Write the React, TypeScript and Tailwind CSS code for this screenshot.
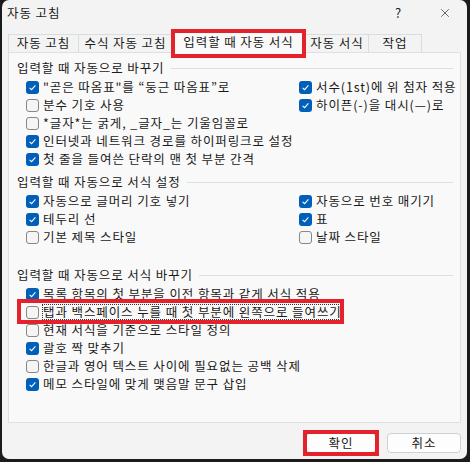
import * as React from 'react';
import { X } from 'lucide-react';

interface IItem {
  label: string;
  checked: boolean;
  focused?: boolean;
}

const CheckBox: React.FC<{ checked: boolean }> = ({ checked }) =>
  checked ? (
    <span className="flex h-[13px] w-[13px] shrink-0 items-center justify-center rounded-[3px] bg-[#005fb8]">
      <svg width="9" height="9" viewBox="0 0 9 9">
        <path d="M1.6 4.8 L3.6 6.6 L7.4 2.4" fill="none" stroke="#ffffff" strokeWidth="1.1" />
      </svg>
    </span>
  ) : (
    <span className="h-[13px] w-[13px] shrink-0 rounded-[3px] border border-[#878787] bg-[#f5f5f5]" />
  );

const Row: React.FC<{ item: IItem }> = ({ item }) => (
  <div className="relative flex h-[18px] items-center gap-[4px]">
    <CheckBox checked={item.checked} />
    <span
      className={
        item.focused
          ? 'whitespace-nowrap leading-[14px] outline-1 outline-dotted outline-[#333]'
          : 'whitespace-nowrap'
      }
    >
      {item.label}
    </span>
    {item.focused && (
      <div className="absolute -left-[9px] -top-[4px] h-[25px] w-[327px] border-4 border-[#e3222c]" />
    )}
  </div>
);

const Header: React.FC<{ title: string; className?: string }> = ({ title, className }) => (
  <div className={`flex h-[18px] items-center ${className ?? ''}`}>
    <span className="whitespace-nowrap">{title}</span>
    <div className="ml-[6px] mr-[7px] h-px flex-1 bg-[#dedede]" />
  </div>
);

const Column: React.FC<{ items: IItem[]; className?: string }> = ({ items, className }) => (
  <div className={`flex flex-col ${className ?? ''}`}>
    {items.map((item) => (
      <Row key={item.label} item={item} />
    ))}
  </div>
);

const tabs = [
  { label: '자동 고침', width: 'w-[70px]' },
  { label: '수식 자동 고침', width: 'w-[94px]' },
  { label: '입력할 때 자동 서식', width: 'w-[133px]', active: true },
  { label: '자동 서식', width: 'w-[63px]' },
  { label: '작업', width: 'w-[54px]' },
];

const App: React.FC = () => {
  return (
    <div className="h-[462px] w-[470px] bg-[#1b1b1b] font-['Noto_Sans_CJK_KR','Malgun_Gothic',sans-serif] text-[12.5px] tracking-[0.9px] text-[#1a1a1a]">
      <div className="ml-[2px] flex h-[459px] w-[465px] flex-col rounded-[7px] bg-[#f3f3f3]">
        {/* Title bar */}
        <div className="flex h-[28px] items-center justify-between pb-[2px] pl-[5px] pr-[15px]">
          <span>자동 고침</span>
          <div className="flex items-center gap-[36px]">
            <span className="text-[13px]">?</span>
            <X size={14} strokeWidth={1.1} />
          </div>
        </div>

        {/* Tabs */}
        <div className="relative z-10 flex h-[24px] items-end pl-[6px]">
          {tabs.map((tab) =>
            tab.active ? (
              <div
                key={tab.label}
                className={`relative -mb-px flex h-[22px] items-center justify-center border-x border-t border-[#dcdcdc] bg-[#f9f9f9] ${tab.width}`}
              >
                {tab.label}
                <div className="absolute -bottom-[5px] -left-[2px] -right-[2px] -top-[3px] border-4 border-[#e3222c]" />
              </div>
            ) : (
              <div
                key={tab.label}
                className={`flex h-[18px] items-center justify-center border-l border-t border-[#dcdcdc] last:border-r ${tab.width}`}
              >
                {tab.label}
              </div>
            )
          )}
        </div>

        {/* Panel */}
        <div className="mx-[6px] flex h-[371px] flex-col border border-[#e0e0e0] bg-[#f9f9f9] pl-[8px] pt-[6px]">
          <Header title="입력할 때 자동으로 바꾸기" className="mb-px" />
          <div className="ml-[9px] flex">
            <Column
              className="w-[273px]"
              items={[
                { label: '"곧은 따옴표"를 “둥근 따옴표”로', checked: true },
                { label: '분수 기호 사용', checked: false },
                { label: '*글자*는 굵게, _글자_는 기울임꼴로', checked: false },
                { label: '인터넷과 네트워크 경로를 하이퍼링크로 설정', checked: true },
                { label: '첫 줄을 들여쓴 단락의 맨 첫 부분 간격', checked: true },
              ]}
            />
            <Column
              items={[
                { label: '서수(1st)에 위 첨자 적용', checked: true },
                { label: '하이픈(-)을 대시(—)로', checked: true },
              ]}
            />
          </div>

          <Header title="입력할 때 자동으로 서식 설정" className="mb-px mt-[5px]" />
          <div className="ml-[9px] flex">
            <Column
              className="w-[273px]"
              items={[
                { label: '자동으로 글머리 기호 넣기', checked: true },
                { label: '테두리 선', checked: true },
                { label: '기본 제목 스타일', checked: false },
              ]}
            />
            <Column
              items={[
                { label: '자동으로 번호 매기기', checked: true },
                { label: '표', checked: true },
                { label: '날짜 스타일', checked: false },
              ]}
            />
          </div>

          <Header title="입력할 때 자동으로 서식 바꾸기" className="mb-px mt-[20px]" />
          <div className="ml-[9px] flex flex-col">
            <Row item={{ label: '목록 항목의 첫 부분을 이전 항목과 같게 서식 적용', checked: true }} />
            <Row item={{ label: '탭과 백스페이스 누를 때 첫 부분에 왼쪽으로 들여쓰기', checked: false, focused: true }} />
            <Row item={{ label: '현재 서식을 기준으로 스타일 정의', checked: false }} />
            <Row item={{ label: '괄호 짝 맞추기', checked: true }} />
            <Row item={{ label: '한글과 영어 텍스트 사이에 필요없는 공백 삭제', checked: false }} />
            <Row item={{ label: '메모 스타일에 맞게 맺음말 문구 삽입', checked: true }} />
          </div>
        </div>

        {/* Buttons */}
        <div className="flex flex-1 items-start justify-end gap-[11px] pr-[6px] pt-[10px]">
          <div className="relative">
            <button className="h-[20px] w-[70px] rounded-[4px] border border-[#d0d0d0] bg-[#fdfdfd]">확인</button>
            <div className="absolute -inset-[3px] border-4 border-[#e3222c]" />
          </div>
          <button className="h-[20px] w-[74px] rounded-[4px] border border-[#d0d0d0] bg-[#fdfdfd]">취소</button>
        </div>
      </div>
    </div>
  );
};

export default App;
